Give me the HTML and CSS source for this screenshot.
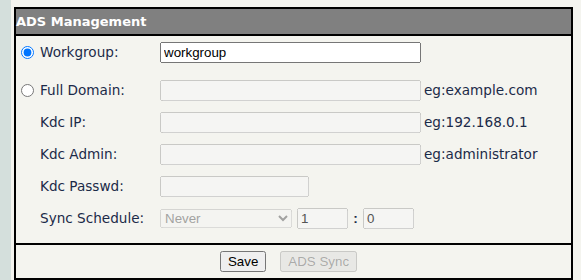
FILE: index.html
```html
<!DOCTYPE html>
<html lang="en">
<head>
    <meta charset="UTF-8">
    <title>ADS Management</title>
    <link rel="stylesheet" href="styles.css">
</head>
<body>
    <div class="side"></div>
    <div class="content">
        <div class="panel">
            <div class="panel-head">ADS Management</div>
            <div class="panel-body">
                <div class="row">
                    <label class="label"><input type="radio" name="mode" checked> Workgroup:</label>
                    <input class="field wide" type="text" value="workgroup">
                </div>
                <div class="row first-domain">
                    <label class="label"><input type="radio" name="mode"> Full Domain:</label>
                    <input class="field wide" type="text" disabled>
                    <span class="hint">eg:example.com</span>
                </div>
                <div class="row">
                    <span class="label indent">Kdc IP:</span>
                    <input class="field wide" type="text" disabled>
                    <span class="hint">eg:192.168.0.1</span>
                </div>
                <div class="row">
                    <span class="label indent">Kdc Admin:</span>
                    <input class="field wide" type="text" disabled>
                    <span class="hint">eg:administrator</span>
                </div>
                <div class="row">
                    <span class="label indent">Kdc Passwd:</span>
                    <input class="field short" type="password" disabled>
                </div>
                <div class="row">
                    <span class="label indent">Sync Schedule:</span>
                    <select class="sched" disabled>
                        <option>Never</option>
                    </select>
                    <input class="field num" type="text" value="1" disabled>
                    <span class="colon">:</span>
                    <input class="field num" type="text" value="0" disabled>
                </div>
            </div>
            <div class="panel-foot">
                <button>Save</button>
                <button disabled>ADS Sync</button>
            </div>
        </div>
    </div>
</body>
</html>
```

FILE: styles.css
```css
body {
    margin: 0;
    display: flex;
    height: 280px;
    overflow: hidden;
    background: #f4f4ef;
    font-family: "DejaVu Sans", Verdana, sans-serif;
    font-size: 13.6px;
    color: #1b2a48;
}

.side {
    width: 11px;
    background: #d4dfdc;
}

.content {
    flex: 1;
    padding: 7px 0 0 3px;
}

.panel {
    width: 559px;
    box-sizing: border-box;
    border: 2px solid #000;
}

.panel-head {
    height: 25px;
    line-height: 25px;
    background: #808080;
    color: #fff;
    font-size: 13px;
    font-weight: bold;
    border-bottom: 2px solid #000;
}

.panel-body { padding-bottom: 9px }

.row {
    display: flex;
    align-items: center;
    height: 32px;
}

.first-domain { margin-top: 6px }

.label {
    width: 144px;
    display: flex;
    align-items: center;
}
.label input {
    margin: 0 6px 0 5px;
    width: 13px;
    height: 13px;
}
.indent { padding-left: 24px; box-sizing: border-box }

.field {
    box-sizing: border-box;
    height: 21px;
    margin: 0;
    font-family: "Liberation Sans", Arial, sans-serif;
    font-size: 13.33px;
}
.wide { width: 261px }
.short { width: 149px }
.num { width: 51px; color: #545454 }

.sched {
    width: 132px;
    height: 19px;
    margin: 0 5px 0 0;
    font-family: "Liberation Sans", Arial, sans-serif;
    font-size: 13.33px;
}

.colon {
    width: 15px;
    text-align: center;
    font-family: "Liberation Sans", Arial, sans-serif;
    font-weight: bold;
}

.hint { margin-left: 3px }

.panel-foot {
    border-top: 2px solid #000;
    height: 33px;
    display: flex;
    align-items: center;
    justify-content: center;
    gap: 14px;
    padding-right: 10px;
}

button {
    height: 21px;
    font-family: "Liberation Sans", Arial, sans-serif;
    font-size: 13.33px;
}
```
